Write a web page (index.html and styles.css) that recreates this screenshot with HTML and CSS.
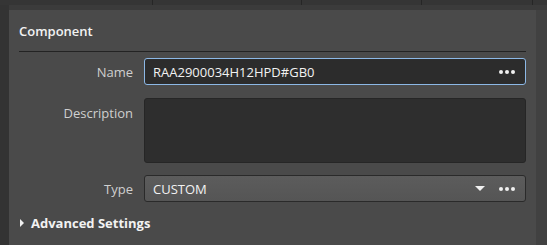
FILE: index.html
```html
<!DOCTYPE html>
<html lang="en">
<head>
    <meta charset="UTF-8">
    <title>Component properties</title>
    <link rel="stylesheet" href="styles.css">
</head>
<body>

    <div class="tabs">
        <span class="tab tab-1"></span>
        <span class="tab tab-2"></span>
        <span class="tab tab-3"></span>
        <span class="tab tab-4"></span>
    </div>

    <div class="workspace">
        <div class="gutter-left"></div>
        <div class="panel">
            <div class="section-title">Component</div>

            <div class="form">
                <label class="field-label">Name</label>
                <div class="field input focused">
                    <span class="value">RAA2900034H12HPD#GB0</span>
                    <span class="dots"><i></i><i></i><i></i></span>
                </div>

                <label class="field-label top">Description</label>
                <div class="field textarea"></div>

                <label class="field-label">Type</label>
                <div class="field combo">
                    <span class="value">CUSTOM</span>
                    <span class="arrow"></span>
                    <span class="dots"><i></i><i></i><i></i></span>
                </div>
            </div>

            <div class="expander">
                <span class="caret"></span>
                Advanced Settings
            </div>
        </div>
        <div class="gutter-right"></div>
    </div>

</body>
</html>
```

FILE: styles.css
```css
body {
    margin: 0;
    background: #343434;
    font-family: 'Open Sans', sans-serif;
    font-size: 13px;
    color: #e6e6e6;
    height: 245px;
    overflow: hidden;
}

.tabs {
    display: flex;
    height: 5px;
    background: #353535;
}

.tab {
    box-sizing: border-box;
    border-right: 1px solid #262626;
}

.tab-1 { width: 153px; }
.tab-2 { width: 149px; }
.tab-3 { width: 120px; }
.tab-4 { width: 111px; }

.workspace {
    display: flex;
    height: 240px;
}

.gutter-left {
    width: 9px;
    background: #333333;
}

.gutter-right {
    width: 11px;
    background: #414141;
    border-top: 5px solid #3b3b3b;
}

.panel {
    flex: 1;
    background: #4a4a4a;
    border-top: 5px solid #3b3b3b;
    padding: 0 10px;
}

.section-title {
    height: 41px;
    line-height: 42px;
    font-weight: 600;
    color: #f2f2f2;
    border-bottom: 1px solid #232323;
}

.form {
    display: grid;
    grid-template-columns: 114px 1fr;
    column-gap: 11px;
    row-gap: 13px;
    margin-top: 6px;
}

.field-label {
    justify-self: end;
    align-self: center;
    color: #cfcfcf;
}

.field-label.top {
    align-self: start;
    margin-top: 6px;
}

.field {
    box-sizing: border-box;
    height: 27px;
    border-radius: 3px;
    display: flex;
    align-items: center;
    padding: 0 10px 0 8px;
}

.input {
    background: #2c2c2c;
    border: 1px solid #262626;
}

.input.focused {
    border-color: #8cb8e6;
}

.textarea {
    height: 65px;
    background: #2e2e2e;
    border: 1px solid #262626;
    margin-bottom: -1px;
}

.combo {
    background: linear-gradient(#5c5c5c, #555555);
    border: 1px solid #2a2a2a;
}

.value {
    flex: 1;
    color: #f2f2f2;
}

.arrow {
    width: 0;
    height: 0;
    border-left: 5px solid transparent;
    border-right: 5px solid transparent;
    border-top: 5px solid #f0f0f0;
    margin-right: 14px;
}

.dots {
    display: flex;
    gap: 2px;
}

.dots i {
    width: 4px;
    height: 4px;
    border-radius: 50%;
    background: #f0f0f0;
}

.expander {
    display: flex;
    align-items: center;
    margin-top: 12px;
    font-weight: 700;
    color: #f2f2f2;
}

.caret {
    width: 0;
    height: 0;
    border-top: 4px solid transparent;
    border-bottom: 4px solid transparent;
    border-left: 4px solid #f0f0f0;
    margin: 0 7px 0 1px;
}
```
